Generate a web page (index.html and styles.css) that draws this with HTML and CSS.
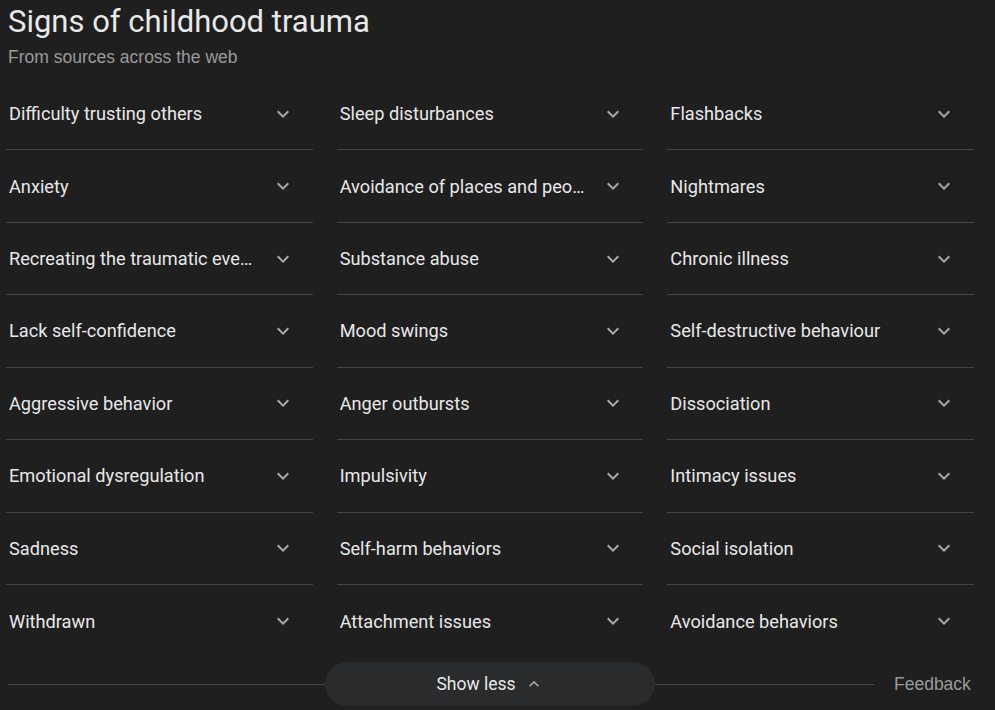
FILE: index.html
```html
<!DOCTYPE html>
<html>
<head>
<meta charset="utf-8">
<link rel="stylesheet" href="styles.css">
</head>
<body>
<div class="page">
  <h1 class="title">Signs of childhood trauma</h1>
  <div class="subtitle">From sources across the web</div>
  <div class="grid">
    <div class="cell"><span class="label">Difficulty trusting others</span><svg class="chev" viewBox="0 0 24 24"><path d="M7.41 8.59 12 13.17l4.59-4.58L18 10l-6 6-6-6z"/></svg></div>
    <div class="cell"><span class="label">Sleep disturbances</span><svg class="chev" viewBox="0 0 24 24"><path d="M7.41 8.59 12 13.17l4.59-4.58L18 10l-6 6-6-6z"/></svg></div>
    <div class="cell"><span class="label">Flashbacks</span><svg class="chev" viewBox="0 0 24 24"><path d="M7.41 8.59 12 13.17l4.59-4.58L18 10l-6 6-6-6z"/></svg></div>

    <div class="cell"><span class="label">Anxiety</span><svg class="chev" viewBox="0 0 24 24"><path d="M7.41 8.59 12 13.17l4.59-4.58L18 10l-6 6-6-6z"/></svg></div>
    <div class="cell"><span class="label">Avoidance of places and people</span><svg class="chev" viewBox="0 0 24 24"><path d="M7.41 8.59 12 13.17l4.59-4.58L18 10l-6 6-6-6z"/></svg></div>
    <div class="cell"><span class="label">Nightmares</span><svg class="chev" viewBox="0 0 24 24"><path d="M7.41 8.59 12 13.17l4.59-4.58L18 10l-6 6-6-6z"/></svg></div>

    <div class="cell"><span class="label">Recreating the traumatic event</span><svg class="chev" viewBox="0 0 24 24"><path d="M7.41 8.59 12 13.17l4.59-4.58L18 10l-6 6-6-6z"/></svg></div>
    <div class="cell"><span class="label">Substance abuse</span><svg class="chev" viewBox="0 0 24 24"><path d="M7.41 8.59 12 13.17l4.59-4.58L18 10l-6 6-6-6z"/></svg></div>
    <div class="cell"><span class="label">Chronic illness</span><svg class="chev" viewBox="0 0 24 24"><path d="M7.41 8.59 12 13.17l4.59-4.58L18 10l-6 6-6-6z"/></svg></div>

    <div class="cell"><span class="label">Lack self-confidence</span><svg class="chev" viewBox="0 0 24 24"><path d="M7.41 8.59 12 13.17l4.59-4.58L18 10l-6 6-6-6z"/></svg></div>
    <div class="cell"><span class="label">Mood swings</span><svg class="chev" viewBox="0 0 24 24"><path d="M7.41 8.59 12 13.17l4.59-4.58L18 10l-6 6-6-6z"/></svg></div>
    <div class="cell"><span class="label">Self-destructive behaviour</span><svg class="chev" viewBox="0 0 24 24"><path d="M7.41 8.59 12 13.17l4.59-4.58L18 10l-6 6-6-6z"/></svg></div>

    <div class="cell"><span class="label">Aggressive behavior</span><svg class="chev" viewBox="0 0 24 24"><path d="M7.41 8.59 12 13.17l4.59-4.58L18 10l-6 6-6-6z"/></svg></div>
    <div class="cell"><span class="label">Anger outbursts</span><svg class="chev" viewBox="0 0 24 24"><path d="M7.41 8.59 12 13.17l4.59-4.58L18 10l-6 6-6-6z"/></svg></div>
    <div class="cell"><span class="label">Dissociation</span><svg class="chev" viewBox="0 0 24 24"><path d="M7.41 8.59 12 13.17l4.59-4.58L18 10l-6 6-6-6z"/></svg></div>

    <div class="cell"><span class="label">Emotional dysregulation</span><svg class="chev" viewBox="0 0 24 24"><path d="M7.41 8.59 12 13.17l4.59-4.58L18 10l-6 6-6-6z"/></svg></div>
    <div class="cell"><span class="label">Impulsivity</span><svg class="chev" viewBox="0 0 24 24"><path d="M7.41 8.59 12 13.17l4.59-4.58L18 10l-6 6-6-6z"/></svg></div>
    <div class="cell"><span class="label">Intimacy issues</span><svg class="chev" viewBox="0 0 24 24"><path d="M7.41 8.59 12 13.17l4.59-4.58L18 10l-6 6-6-6z"/></svg></div>

    <div class="cell"><span class="label">Sadness</span><svg class="chev" viewBox="0 0 24 24"><path d="M7.41 8.59 12 13.17l4.59-4.58L18 10l-6 6-6-6z"/></svg></div>
    <div class="cell"><span class="label">Self-harm behaviors</span><svg class="chev" viewBox="0 0 24 24"><path d="M7.41 8.59 12 13.17l4.59-4.58L18 10l-6 6-6-6z"/></svg></div>
    <div class="cell"><span class="label">Social isolation</span><svg class="chev" viewBox="0 0 24 24"><path d="M7.41 8.59 12 13.17l4.59-4.58L18 10l-6 6-6-6z"/></svg></div>

    <div class="cell last"><span class="label">Withdrawn</span><svg class="chev" viewBox="0 0 24 24"><path d="M7.41 8.59 12 13.17l4.59-4.58L18 10l-6 6-6-6z"/></svg></div>
    <div class="cell last"><span class="label">Attachment issues</span><svg class="chev" viewBox="0 0 24 24"><path d="M7.41 8.59 12 13.17l4.59-4.58L18 10l-6 6-6-6z"/></svg></div>
    <div class="cell last"><span class="label">Avoidance behaviors</span><svg class="chev" viewBox="0 0 24 24"><path d="M7.41 8.59 12 13.17l4.59-4.58L18 10l-6 6-6-6z"/></svg></div>
  </div>
  <div class="footer">
    <div class="line"></div>
    <button class="more">Show less<svg class="up" viewBox="0 0 24 24"><path d="M7.41 15.41 12 10.83l4.59 4.58L18 14l-6-6-6 6z"/></svg></button>
    <div class="line short"></div>
    <span class="feedback">Feedback</span>
  </div>
</div>
</body>
</html>
```
FILE: styles.css
```css
html, body {
  margin: 0;
  padding: 0;
  background: #1f1f1f;
  height: 100%;
  overflow: hidden;
}
.page {
  padding: 0 21px 0 6px;
  font-family: Roboto, "Liberation Sans", Arial, sans-serif;
}
.title {
  margin: 0;
  padding: 4px 0 0 2px;
  font-size: 31px;
  font-weight: 400;
  line-height: 36px;
  color: #e8e8e8;
}
.subtitle {
  margin-top: 6px;
  padding-left: 2px;
  font-family: "Liberation Sans", Arial, sans-serif;
  font-size: 17.5px;
  line-height: 22px;
  color: #9a9a9a;
}
.grid {
  margin-top: 10px;
  display: grid;
  grid-template-columns: repeat(3, 1fr);
  column-gap: 24px;
}
.cell {
  box-sizing: border-box;
  height: 72.43px;
  display: flex;
  align-items: center;
  padding: 0 18px 0 3px;
  border-bottom: 1px solid #444546;
  min-width: 0;
}
.cell.last {
  border-bottom: none;
}
.label {
  flex: 1;
  min-width: 0;
  white-space: nowrap;
  overflow: hidden;
  text-overflow: ellipsis;
  font-size: 18.2px;
  color: #e8e8e8;
  padding-right: 16px;
}
.chev {
  width: 24px;
  height: 24px;
  fill: #a8a8a8;
  flex: none;
}
.footer {
  display: flex;
  align-items: center;
  height: 44px;
  margin-top: 5px;
  margin-left: 2px;
}
.line {
  width: 317px;
  height: 1px;
  background: #444546;
}
.line.short {
  width: 220px;
}
.more {
  width: 330px;
  height: 44px;
  border: none;
  border-radius: 22px;
  background: #2a2b2d;
  color: #e8e8e8;
  font-family: Roboto, "Liberation Sans", Arial, sans-serif;
  font-size: 17.5px;
  display: flex;
  align-items: center;
  justify-content: center;
  gap: 8px;
  padding: 0;
}
.up {
  width: 20px;
  height: 20px;
  fill: #a8a8a8;
}
.feedback {
  margin-left: 19px;
  font-family: "Liberation Sans", Arial, sans-serif;
  font-size: 17.5px;
  color: #9a9a9a;
}
```
